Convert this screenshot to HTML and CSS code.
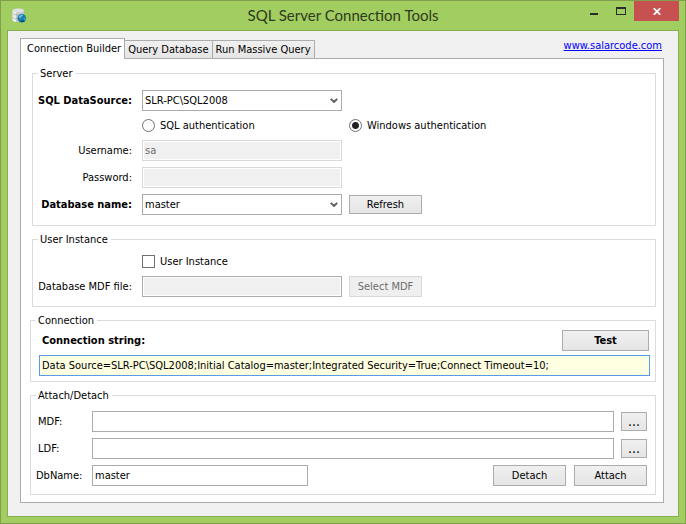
FILE: index.html
```html
<!DOCTYPE html>
<html lang="en">
<head>
<meta charset="utf-8">
<title>SQL Server Connection Tools</title>
<link rel="stylesheet" href="styles.css">
</head>
<body>
<div class="window">
  <header class="titlebar">
    <svg class="app-icon" width="16" height="16" viewBox="0 0 16 16" aria-hidden="true">
      <path d="M0.500 2.500C1 0 11 0 12 2.500V12C11 14.800 1.500 14.800 0.500 12Z" fill="#c4c9cb"/>
      <path d="M0.500 2.500V12C1 13.500 2.500 14 4 14V4C2 4 1 3.500 0.500 2.500Z" fill="#eceeef"/>
      <ellipse cx="6.200" cy="2.500" rx="5.500" ry="1.900" fill="#dde1e3"/>
      <path d="M0.500 5.500C2 7.500 10 7.500 12 5.500M0.500 9C2 11 5 11 6 10.500" fill="none" stroke="#a3abad" stroke-width="0.800"/>
      <circle cx="9.800" cy="10.300" r="4.300" fill="#1b7ba6"/>
      <path d="M7 8.500C8 6.500 10 6.500 11 7C11 8.500 9 8.500 8.500 10.500C7.500 10.500 7 9.500 7 8.500Z" fill="#62c3e2"/>
      <path d="M11.500 10C13 9.500 14 10.500 13.500 12L12 13Z" fill="#2f9fc8"/>
      <path d="M8 13.500C10 14.500 12 14 13 13L11 12Z" fill="#0b4b77"/>
    </svg>
    <h1 class="title">SQL Server Connection Tools</h1>
    <div class="window-buttons">
      <button type="button" class="caption" aria-label="Minimize"><svg width="8" height="8" viewBox="0 0 8 8"><path d="M0 6h8v2H0z" fill="#2b2b2b"/></svg></button>
      <button type="button" class="caption" aria-label="Maximize"><svg width="10" height="8" viewBox="0 0 10 8"><path d="M0 0h10v8H0zM1 2v5h8V2z" fill="#2b2b2b" fill-rule="evenodd"/></svg></button>
      <button type="button" class="caption caption-close" aria-label="Close"><svg width="8" height="7" viewBox="0 0 8 7"><path d="M0.700 0.200L7.300 6.800M7.300 0.200L0.700 6.800" stroke="#fff" stroke-width="1.800"/></svg></button>
    </div>
  </header>
  <main class="client">
    <div class="tabstrip">
      <div class="tabs" role="tablist">
        <button type="button" class="tab tab-active" role="tab" aria-selected="true">Connection Builder</button>
        <button type="button" class="tab" role="tab" aria-selected="false">Query Database</button>
        <button type="button" class="tab" role="tab" aria-selected="false">Run Massive Query</button>
      </div>
      <a class="site-link" href="http://www.salarcode.com">www.salarcode.com</a>
    </div>
    <form class="panel">
      <fieldset class="group group-inset server">
        <legend>Server</legend>
        <label class="name strong" for="source">SQL DataSource:</label>
        <div class="combo">
          <select id="source"><option>SLR-PC\SQL2008</option></select>
          <svg class="chevron" width="8" height="6" viewBox="0 0 8 6"><path d="M0.800 0.800L4 4L7.200 0.800" fill="none" stroke="#5a5a5a" stroke-width="1.900"/></svg>
        </div>
        <label class="choice choice-first"><input type="radio" name="auth">SQL authentication</label>
        <label class="choice"><input type="radio" name="auth" checked>Windows authentication</label>
        <label class="name" for="user">Username:</label>
        <input class="field" id="user" type="text" value="sa" disabled>
        <label class="name" for="pass">Password:</label>
        <input class="field" id="pass" type="password" disabled>
        <label class="name strong" for="database">Database name:</label>
        <div class="combo">
          <select id="database"><option>master</option></select>
          <svg class="chevron" width="8" height="6" viewBox="0 0 8 6"><path d="M0.800 0.800L4 4L7.200 0.800" fill="none" stroke="#5a5a5a" stroke-width="1.900"/></svg>
        </div>
        <button type="button" class="button button-low">Refresh</button>
      </fieldset>
      <fieldset class="group group-inset instance">
        <legend>User Instance</legend>
        <label class="choice choice-first"><input type="checkbox">User Instance</label>
        <label class="name" for="mdf-file">Database MDF file:</label>
        <input class="field field-readonly" id="mdf-file" type="text" readonly>
        <button type="button" class="button" disabled>Select MDF</button>
      </fieldset>
      <fieldset class="group connection">
        <legend>Connection</legend>
        <div class="connection-head">
          <label class="strong" for="connstr">Connection string:</label>
          <button type="button" class="button button-test">Test</button>
        </div>
        <input class="field field-connection" id="connstr" type="text" value="Data Source=SLR-PC\SQL2008;Initial Catalog=master;Integrated Security=True;Connect Timeout=10;">
      </fieldset>
      <fieldset class="group attach">
        <legend>Attach/Detach</legend>
        <label class="path-name" for="mdf">MDF:</label>
        <input class="field" id="mdf" type="text">
        <button type="button" class="button button-low button-browse" aria-label="Browse MDF">...</button>
        <label class="path-name" for="ldf">LDF:</label>
        <input class="field" id="ldf" type="text">
        <button type="button" class="button button-low button-browse" aria-label="Browse LDF">...</button>
        <label for="dbname">DbName:</label>
        <div class="attach-actions">
          <input class="field field-dbname" id="dbname" type="text" value="master">
          <button type="button" class="button">Detach</button>
          <button type="button" class="button">Attach</button>
        </div>
      </fieldset>
    </form>
  </main>
</div>
</body>
</html>
```
FILE: styles.css
```css
* {
  box-sizing: border-box;
}

body {
  margin: 0;
}

body,
button,
input,
select {
  font-family: Tahoma, "DejaVu Sans Condensed", "DejaVu Sans", sans-serif;
  font-size: 11px;
  line-height: 15px;
  color: #000;
}

.window {
  display: flex;
  flex-direction: column;
  min-height: 100vh;
  padding: 0 6px 6px;
  border: 1px solid #7f9f4c;
  background: #a2cd60;
}

/* Title bar */
.titlebar {
  display: grid;
  grid-template-columns: 1fr auto 1fr;
  height: 29px;
}

.app-icon {
  margin: 7px 0 0 5px;
}

.title {
  margin: 0;
  font: 15px/29px Lato, sans-serif;
  color: #2f3a1e;
}

.window-buttons {
  display: flex;
  justify-content: flex-end;
  align-items: flex-start;
}

.caption {
  display: flex;
  align-items: center;
  justify-content: center;
  width: 27px;
  height: 20px;
  padding: 0;
  border: 0;
  background: none;
}

.caption-close {
  width: 45px;
  background: #c75050;
}

/* Client area and tabs */
.client {
  display: flex;
  flex: 1;
  flex-direction: column;
  padding: 7px 14px 13px 12px;
  border: 1px solid #86ae4c;
  background: #f0f0f0;
}

.tabstrip {
  display: flex;
  justify-content: space-between;
  height: 20px;
}

.tabs {
  display: flex;
  align-items: flex-end;
}

.tab {
  height: 18px;
  padding: 0 3px;
  border: 1px solid #acacac;
  border-width: 1px 1px 0 0;
  background: linear-gradient(#f0f0f0, #e5e5e5);
  white-space: nowrap;
}

.tab-active {
  z-index: 1;
  height: 21px;
  margin-bottom: -1px;
  padding: 0 3px 2px 6px;
  border-left-width: 1px;
  background: #fff;
}

.site-link {
  padding-right: 2px;
  color: #00f;
}

.panel {
  flex: 1;
  display: flex;
  flex-direction: column;
  gap: 6px;
  padding: 7px 7px 7px 9px;
  border: 1px solid #acacac;
  background: #fff;
}

/* Groups */
.group {
  min-width: 0;
  margin: 0;
  padding: 0;
  border: 1px solid #dcdcdc;
}

.group-inset {
  margin-left: 2px;
}

legend {
  margin-left: 5px;
  padding: 0 3px 0 2px;
}

.server,
.instance {
  display: grid;
  grid-template-columns: 102px 200px 1fr;
  gap: 6px 7px;
  align-items: center;
  padding: 9px 0 10px;
}

.instance {
  padding: 6px 0 9px;
}

.connection {
  display: flex;
  flex-direction: column;
  gap: 4px;
  padding: 2px 5px 5px 8px;
}

.connection legend {
  margin-left: -3px;
}

.connection-head {
  display: flex;
  align-items: center;
  justify-content: space-between;
  padding: 0 1px 0 3px;
}

.attach {
  display: grid;
  grid-template-columns: 49px 1fr auto;
  gap: 6px 7px;
  align-items: center;
  padding: 8px 8px 8px 5px;
}

.attach legend {
  margin-left: 0;
}

.attach-actions {
  display: flex;
  grid-column: 2 / 4;
  gap: 8px;
}

/* Labels */
.name {
  grid-column: 1;
  padding-right: 3px;
  text-align: right;
  white-space: nowrap;
}

.strong {
  font-weight: bold;
}

.path-name {
  padding-left: 2px;
}

.choice {
  display: flex;
  align-items: center;
  gap: 5px;
  height: 17px;
}

.choice-first {
  grid-column: 2;
}

/* Controls */
.field,
.combo select {
  width: 100%;
  height: 21px;
  padding: 0 2px;
  border: 1px solid #ababab;
  border-radius: 0;
  outline: 0;
  background: #fff;
}

.field:disabled,
.field-readonly {
  background: #f0f0f0;
  box-shadow: inset 0 0 0 1px #fff;
}

.field:disabled {
  border-color: #d9d9d9;
  color: #6d6d6d;
}

.field-connection {
  border-color: #569de5;
  background: #ffffe1;
}

.field-dbname {
  width: 216px;
  margin-right: auto;
}

.combo {
  position: relative;
}

.combo select {
  display: block;
  appearance: none;
}

.chevron {
  position: absolute;
  top: 8px;
  right: 4px;
  pointer-events: none;
}

input[type="radio"],
input[type="checkbox"] {
  width: 13px;
  height: 13px;
  margin: 0;
  border: 1px solid #707070;
  background: #fff;
  appearance: none;
}

input[type="radio"] {
  border-radius: 50%;
}

input[type="radio"]:checked {
  background: radial-gradient(circle, #212121 3px, #fff 4px);
}

.button {
  width: 73px;
  height: 21px;
  padding: 0;
  border: 1px solid #acacac;
  background: linear-gradient(#f0f0f0, #e5e5e5);
}

.button:disabled {
  border-color: #d9d9d9;
  background: #efefef;
  color: #6d6d6d;
}

.button-low {
  height: 19px;
}

.button-test {
  width: 87px;
  font-weight: bold;
}

.button-browse {
  width: 26px;
  font-size: 14px;
}
```
